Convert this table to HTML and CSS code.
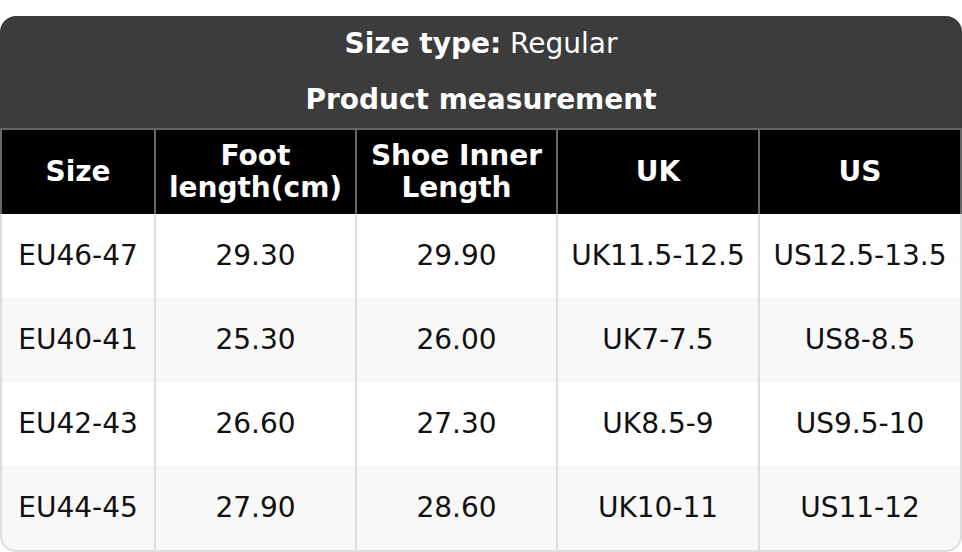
FILE: index.html
```html
<!DOCTYPE html>
<html>
<head>
<meta charset="utf-8">
<link rel="stylesheet" href="styles.css">
</head>
<body>
<div class="card">
  <div class="title"><b>Size type:</b>&nbsp;Regular</div>
  <div class="title"><b>Product measurement</b></div>
  <div class="row head">
    <div class="cell">Size</div>
    <div class="cell">Foot<br>length(cm)</div>
    <div class="cell">Shoe Inner<br>Length</div>
    <div class="cell">UK</div>
    <div class="cell">US</div>
  </div>
  <div class="row">
    <div class="cell">EU46-47</div>
    <div class="cell">29.30</div>
    <div class="cell">29.90</div>
    <div class="cell">UK11.5-12.5</div>
    <div class="cell">US12.5-13.5</div>
  </div>
  <div class="row alt">
    <div class="cell">EU40-41</div>
    <div class="cell">25.30</div>
    <div class="cell">26.00</div>
    <div class="cell">UK7-7.5</div>
    <div class="cell">US8-8.5</div>
  </div>
  <div class="row">
    <div class="cell">EU42-43</div>
    <div class="cell">26.60</div>
    <div class="cell">27.30</div>
    <div class="cell">UK8.5-9</div>
    <div class="cell">US9.5-10</div>
  </div>
  <div class="row alt last">
    <div class="cell">EU44-45</div>
    <div class="cell">27.90</div>
    <div class="cell">28.60</div>
    <div class="cell">UK10-11</div>
    <div class="cell">US11-12</div>
  </div>
</div>
</body>
</html>
```

FILE: styles.css
```css
html, body {
  margin: 0;
  padding: 0;
  background: #ffffff;
}
body {
  padding-top: 16px;
  font-family: "DejaVu Sans", sans-serif;
  font-size: 28px;
  color: #111111;
}
.card {
  width: 962px;
  border-radius: 16px;
  overflow: hidden;
  background: #ffffff;
}
.title {
  height: 56px;
  background: #3c3c3c;
  color: #ffffff;
  display: flex;
  align-items: center;
  justify-content: center;
  padding-bottom: 2px;
  box-sizing: border-box;
}
.title b {
  font-weight: bold;
}
.row {
  display: grid;
  grid-template-columns: 154px 201px 201px 202px 204px;
  height: 84px;
  background: #ffffff;
}
.row.alt {
  background: #f8f8f8;
}
.cell {
  box-sizing: border-box;
  border-left: 2px solid #dddddd;
  display: flex;
  align-items: center;
  justify-content: center;
  text-align: center;
  line-height: 32px;
}
.cell:last-child {
  border-right: 2px solid #dddddd;
}
.row.head {
  background: #000000;
  color: #ffffff;
  font-weight: bold;
  height: 84px;
  border-top: 2px solid #666666;
}
.row.head .cell {
  border-left-color: #666666;
}
.row.head .cell:last-child {
  border-right-color: #666666;
}
.row.last {
  height: 86px;
}
.row.last .cell {
  border-bottom: 2px solid #dddddd;
}
.row.last .cell:first-child {
  border-bottom-left-radius: 16px;
}
.row.last .cell:last-child {
  border-bottom-right-radius: 16px;
}
```
